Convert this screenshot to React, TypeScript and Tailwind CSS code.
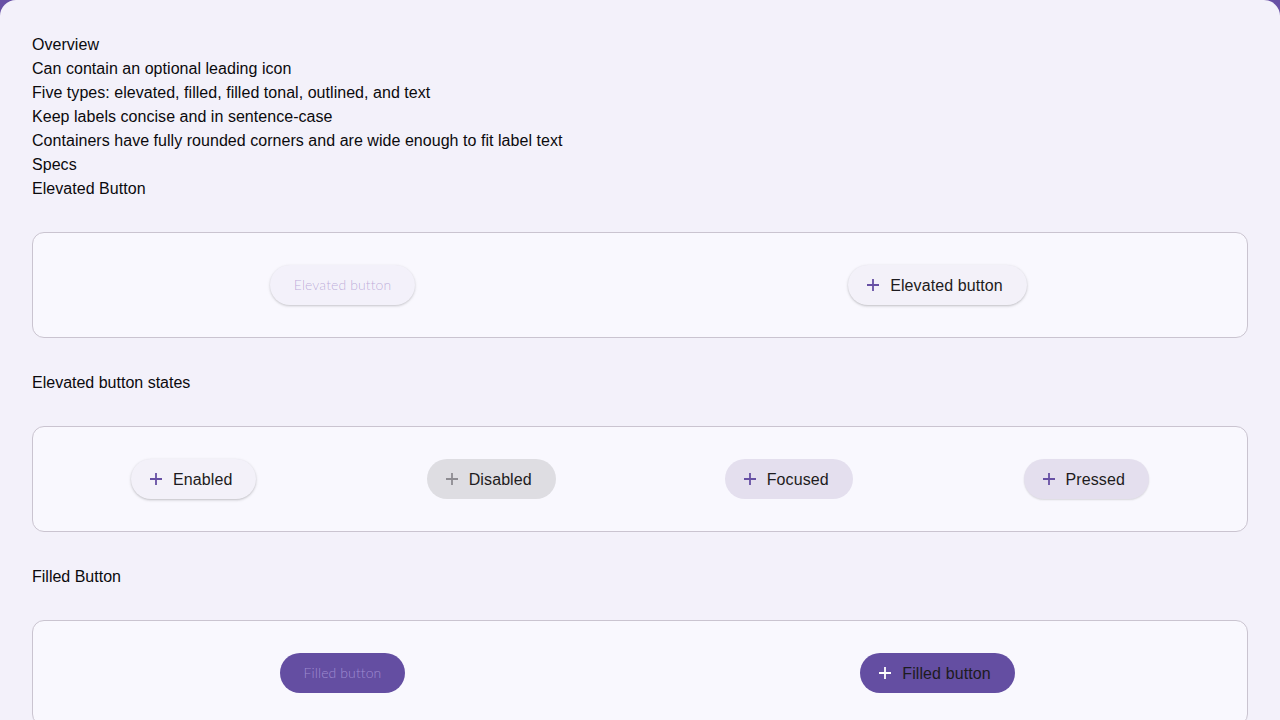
import React from "react";

const Plus = ({ color }: { color: string }) => (
  <svg width="18" height="18" viewBox="0 0 18 18" className="shrink-0">
    <path d="M9 3v12M3 9h12" stroke={color} strokeWidth="1.8" fill="none" />
  </svg>
);

const Card = ({ cols, children }: { cols: 2 | 4; children: React.ReactNode }) => (
  <div
    className={`grid ${cols === 2 ? "grid-cols-2" : "grid-cols-4"} items-center justify-items-center rounded-xl border border-[#cac4d0] bg-[#f9f8fe] px-3 py-8`}
  >
    {children}
  </div>
);

const IconBtn = ({
  label,
  bg,
  icon,
  shadow,
  text = "text-[#1d1b20]",
}: {
  label: string;
  bg: string;
  icon: string;
  shadow?: "strong" | "soft";
  text?: string;
}) => (
  <div
    className={`flex h-10 items-center gap-2 rounded-full pl-4 pr-6 ${bg} ${
      shadow === "strong"
        ? "shadow-[0_1px_2px_rgba(0,0,0,0.16),0_1px_3px_1px_rgba(0,0,0,0.06)]"
        : shadow === "soft"
        ? "shadow-[0_1px_2px_rgba(0,0,0,0.1),0_1px_2px_0px_rgba(0,0,0,0.04)]"
        : ""
    }`}
  >
    <Plus color={icon} />
    <span className={`translate-y-px text-base leading-6 tracking-[0.1px] ${text}`}>{label}</span>
  </div>
);

export default function App() {
  return (
    <div className="min-h-screen bg-[#6750a4]" style={{ fontFamily: '"Liberation Sans", Arial, sans-serif' }}>
      <div className="min-h-[760px] rounded-t-2xl bg-[#f3f1fa] px-8 pb-8 pt-[33px] text-base leading-6 text-[#0b0a0d]">
        <div className="tracking-[0.04px]">
          <div>Overview</div>
          <div>Can contain an optional leading icon</div>
          <div>Five types: elevated, filled, filled tonal, outlined, and text</div>
          <div>Keep labels concise and in sentence-case</div>
          <div>Containers have fully rounded corners and are wide enough to fit label text</div>
          <div>Specs</div>
          <div>Elevated Button</div>
        </div>

        <div className="mt-[31px]">
          <Card cols={2}>
            <div className="flex h-10 items-center rounded-full bg-[#f3f1fa] px-6 shadow-[0_1px_2px_rgba(0,0,0,0.14),0_1px_3px_1px_rgba(0,0,0,0.05)]">
              <span
                className="text-sm font-light tracking-[0.1px] text-[#7a55b0]/45"
                style={{ fontFamily: "Lato, sans-serif" }}
              >
                Elevated button
              </span>
            </div>
            <IconBtn label="Elevated button" bg="bg-[#f3f1f9]" icon="#6750a4" shadow="strong" />
          </Card>
        </div>

        <div className="mt-[33px]">Elevated button states</div>

        <div className="mt-[31px]">
          <Card cols={4}>
            <IconBtn label="Enabled" bg="bg-[#f3f1f9]" icon="#6750a4" shadow="strong" />
            <IconBtn label="Disabled" bg="bg-[#dedde2]" icon="#8e8c92" />
            <IconBtn label="Focused" bg="bg-[#e4dfee]" icon="#6750a4" />
            <IconBtn label="Pressed" bg="bg-[#e4dfee]" icon="#6750a4" shadow="soft" />
          </Card>
        </div>

        <div className="mt-[33px]">Filled Button</div>

        <div className="mt-[31px]">
          <Card cols={2}>
            <div className="flex h-10 items-center rounded-full bg-[#644ea2] px-6">
              <span
                className="text-sm font-light tracking-[0.1px] text-[#d9c8ff]/50"
                style={{ fontFamily: "Lato, sans-serif" }}
              >
                Filled button
              </span>
            </div>
            <IconBtn label="Filled button" bg="bg-[#644ea2]" icon="#ffffff" />
          </Card>
        </div>
      </div>
    </div>
  );
}
